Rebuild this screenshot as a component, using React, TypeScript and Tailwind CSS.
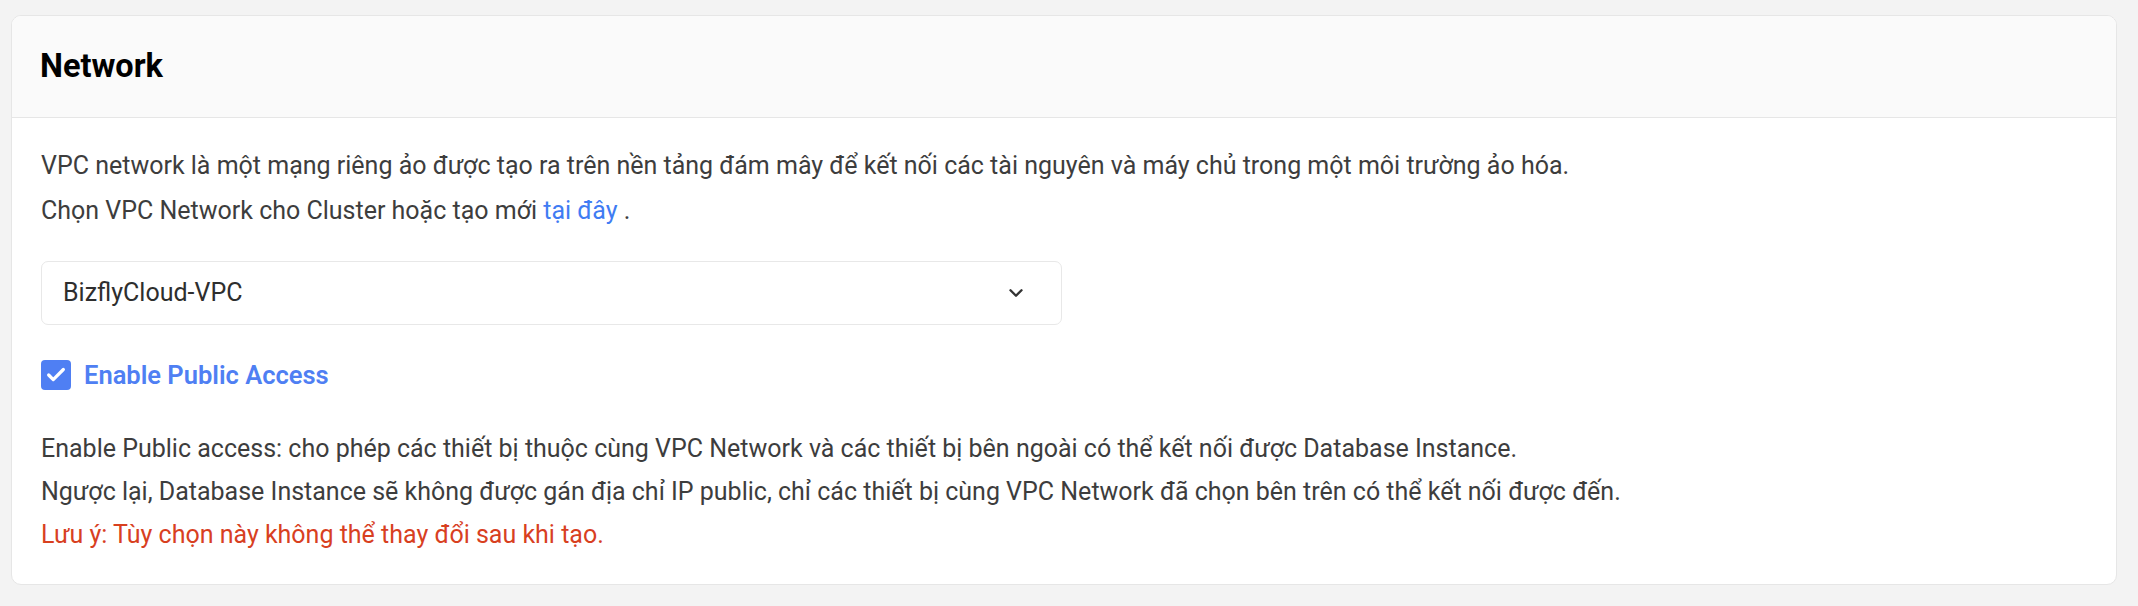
import { Check, ChevronDown } from "lucide-react"

const font = { fontFamily: "Roboto, 'Noto Sans', sans-serif" }

export default function App() {
  return (
    <div className="min-h-screen bg-[#f3f3f3] px-[11px] pt-[15px] pb-[21px]" style={font}>
      <div className="w-[2106px] rounded-[10px] border border-[#e6e6e6] bg-white overflow-hidden">
        <div className="h-[102px] flex items-center px-[28px] bg-[#fafafa] border-b border-[#e6e6e6]">
          <h2 className="text-[32.5px] font-bold text-black leading-none">Network</h2>
        </div>

        <div className="px-[29px] pt-[25px] pb-[28px] text-[25px] text-[#3d3d3d]">
          <p className="leading-[45px]">
            VPC network là một mạng riêng ảo được tạo ra trên nền tảng đám mây để kết nối các tài nguyên và máy chủ trong một môi trường ảo hóa.
          </p>
          <p className="leading-[45px]">
            Chọn VPC Network cho Cluster hoặc tạo mới <a className="text-[#3f7cf3]">tại đây</a> .
          </p>

          <button className="mt-[28px] w-[1021px] h-[64px] rounded-[7px] border border-[#e8e8e8] bg-white flex items-center justify-between pl-[21px] pr-[34px] text-[25px] text-[#2e2e2e]">
            <span>BizflyCloud-VPC</span>
            <ChevronDown size={22} strokeWidth={2.6} className="text-[#333]" />
          </button>

          <label className="mt-[31px] flex items-center gap-[13px]">
            <span className="w-[30px] h-[30px] rounded-[4px] bg-[#4f7ff3] flex items-center justify-center">
              <Check size={22} strokeWidth={3.5} className="text-white" />
            </span>
            <span className="text-[25.5px] font-semibold text-[#4f7ff3]">Enable Public Access</span>
          </label>

          <div className="mt-[33px] leading-[43px]">
            <p>Enable Public access: cho phép các thiết bị thuộc cùng VPC Network và các thiết bị bên ngoài có thể kết nối được Database Instance.</p>
            <p>Ngược lại, Database Instance sẽ không được gán địa chỉ IP public, chỉ các thiết bị cùng VPC Network đã chọn bên trên có thể kết nối được đến.</p>
            <p className="text-[#d8401f]">Lưu ý: Tùy chọn này không thể thay đổi sau khi tạo.</p>
          </div>
        </div>
      </div>
    </div>
  )
}
